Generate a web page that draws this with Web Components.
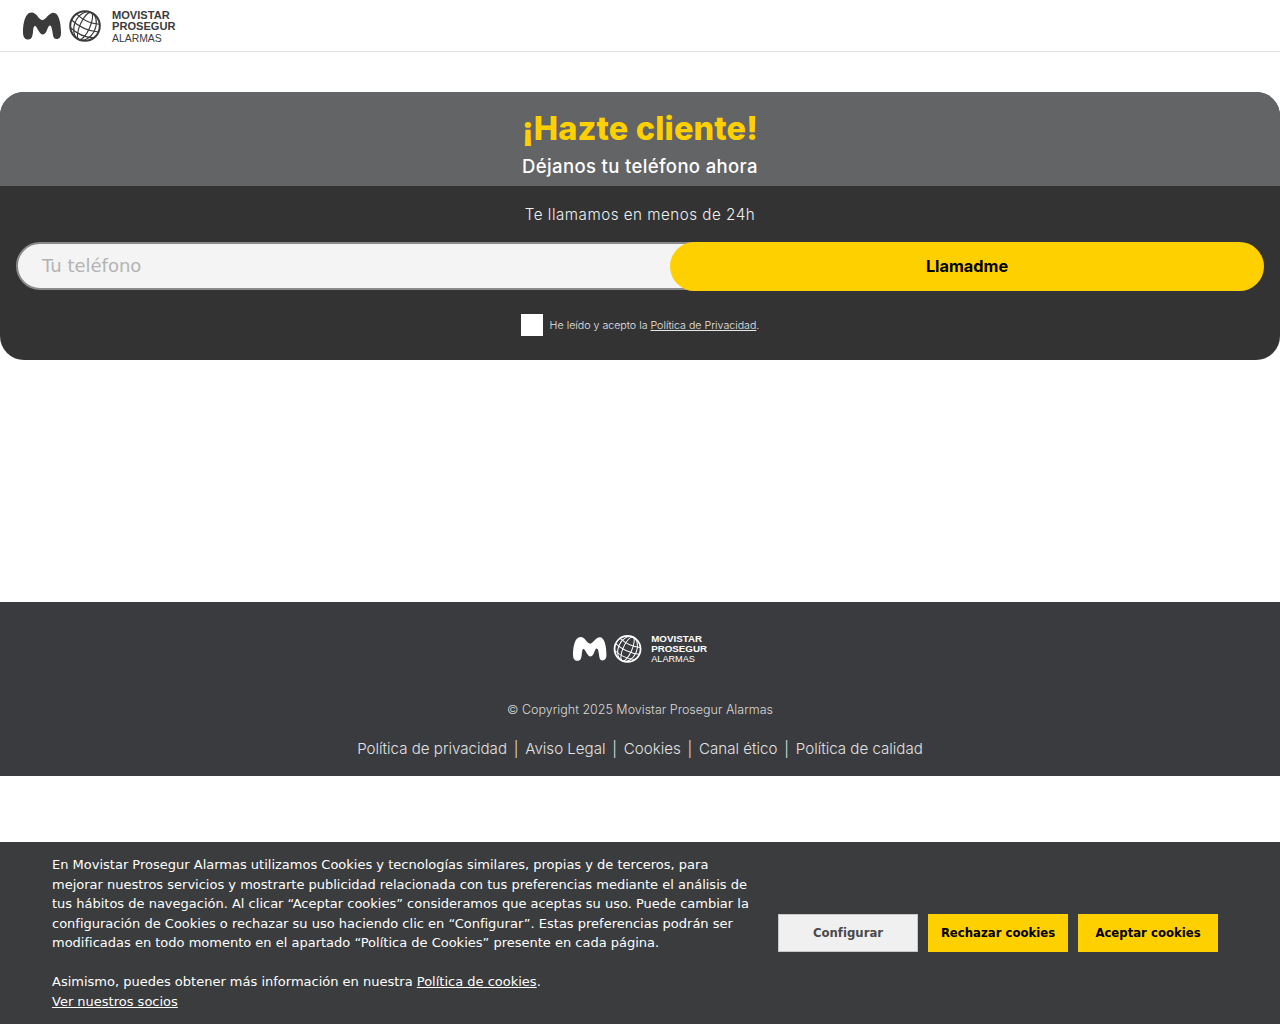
<!DOCTYPE html>
<html lang="es"><head><meta charset="utf-8"><title>Movistar Prosegur Alarmas</title>
<style>
html,body{margin:0;padding:0;background:#fff}
body{height:1024px;overflow:hidden;font-family:"Inter","Noto Sans",sans-serif}
</style></head><body>
<mp-header></mp-header>
<mp-lead-form></mp-lead-form>
<mp-footer></mp-footer>
<mp-cookies></mp-cookies>
<script>
const logoSvg=(c,w,h)=>`<svg width="${w}" height="${h}" viewBox="0 0 78 34" fill="none" aria-hidden="true">
<path fill="${c}" d="M0 23.500C0 15 2 3.500 8.500 3.500C14 3.500 15.500 11 19.500 11C23 11 25.500 3.800 30.500 3.800C35.500 3.800 38 13 38 24C38 28.500 36 30 33.500 30C30.500 30 30 27 29.500 23C29 20 28.500 16.500 26.800 16.500C24.500 16.500 24 25.500 20 25.500C16 25.500 14 17 12 17C10.500 17 10.300 20 10 23C9.500 27 9 30.500 5 30.500C2 30.500 0 28 0 23.500Z"/>
<circle cx="62" cy="17" r="14.800" stroke="${c}" stroke-width="2"/>
<g transform="rotate(24 62 17)" stroke="${c}" stroke-width="1.150" fill="none">
<ellipse cx="62" cy="17" rx="5" ry="14.800"/><ellipse cx="62" cy="17" rx="10.500" ry="14.800"/>
<path d="M49.500 9.500Q62 14 74.500 9.500M47.200 17Q62 22 76.800 17M49.500 24.500Q62 29 74.500 24.500"/></g></svg>`;
class MpLogo extends HTMLElement{connectedCallback(){
const c=this.getAttribute('color')||'#3b3b3b';
const k=parseFloat(this.getAttribute('scale')||'1');
const pad=this.getAttribute('pad')||'2.5';
this.attachShadow({mode:'open'}).innerHTML=`<style>
:host{display:inline-flex;align-items:center;gap:${11*k}px;color:${c};text-align:left}
.t{font:700 ${11.1*k}px/${11.5*k}px "Liberation Sans",Arial,sans-serif;padding-top:${pad}px}
.t span{display:block}.t .l{font-weight:400;font-size:${10.4*k}px}
svg{display:block}
</style>${logoSvg(c,78*k,34*k)}<div class="t"><span>MOVISTAR</span><span>PROSEGUR</span><span class="l">ALARMAS</span></div>`;
}}
customElements.define('mp-logo',MpLogo);
class MpHeader extends HTMLElement{constructor(){super();this.attachShadow({mode:'open'}).innerHTML=`<style>
:host{display:flex;align-items:center;box-sizing:border-box;height:52px;padding:0 0 0 23px;border-bottom:1px solid #e3e3e3;background:#fff}
</style><mp-logo pad="3"></mp-logo>`}}
customElements.define('mp-header',MpHeader);
class MpLeadForm extends HTMLElement{constructor(){super();this.attachShadow({mode:'open'}).innerHTML=`<style>
:host{display:block;margin-top:40px;border-radius:24px;overflow:hidden;background:#333;text-align:center}
.top{height:94px;box-sizing:border-box;background:#636466;padding-top:17px}
h1{margin:0;font:800 32.500px/40px "Inter",sans-serif;color:#ffd000;letter-spacing:.15px}
h2{margin:0;padding-top:5px;font:500 18.500px/24px "Inter",sans-serif;color:#fff;letter-spacing:.36px}
.body{height:174px;box-sizing:border-box;padding-top:19px}
.sub{font:300 15.200px/20px "Inter",sans-serif;color:#f0f0f0;height:37px;letter-spacing:.5px}
.row{display:flex;margin:0 16px;height:49px}
.inp{flex:1 1 auto;box-sizing:border-box;height:48px;background:#f4f4f4;border:2px solid #8a8a8a;border-radius:24px 0 0 24px;margin-right:-30px;padding-left:24px;text-align:left;font:400 18px/44px "DejaVu Sans",sans-serif;color:#b3b3b3}
.btn{position:relative;flex:0 0 594px;height:49px;border-radius:25px;background:#ffd000;color:#000;font:700 16.300px/49px "Inter",sans-serif}
.ok{display:flex;justify-content:center;align-items:flex-start;gap:7px;margin-top:23px;font:300 10.650px/22px "Inter",sans-serif;color:#e6e6e6}
.cb{width:22px;height:22px;background:#fff;flex:none}
.ok span+span{padding-top:1px}
a{color:inherit;text-decoration:underline}
</style>
<div class="top"><h1>¡Hazte cliente!</h1><h2>Déjanos tu teléfono ahora</h2></div>
<div class="body"><div class="sub">Te llamamos en menos de 24h</div>
<div class="row"><div class="inp">Tu teléfono</div><div class="btn">Llamadme</div></div>
<div class="ok"><span class="cb"></span><span>He leído y acepto la <a>Política de Privacidad</a>.</span></div></div>`}}
customElements.define('mp-lead-form',MpLeadForm);
class MpFooter extends HTMLElement{constructor(){super();this.attachShadow({mode:'open'}).innerHTML=`<style>
:host{display:block;box-sizing:border-box;margin-top:242px;height:174px;background:#3a3b3e;text-align:center;padding-top:32px;color:#e2e2e2}
.logo{height:30px;display:flex;justify-content:center}
.c{margin-top:36px;font:300 12.500px/20px "Inter",sans-serif;color:#d9d9d9}
.links{margin-top:18px;display:flex;justify-content:center;gap:6.800px;font:300 15.100px/22px "Inter",sans-serif}
</style><div class="logo"><mp-logo color="#ffffff" scale="0.88" pad="0.5"></mp-logo></div>
<div class="c">© Copyright 2025 Movistar Prosegur Alarmas</div>
<div class="links"><span>Política de privacidad</span><span>|</span><span>Aviso Legal</span><span>|</span><span>Cookies</span><span>|</span><span>Canal ético</span><span>|</span><span>Política de calidad</span></div>`}}
customElements.define('mp-footer',MpFooter);
class MpCookies extends HTMLElement{constructor(){super();this.attachShadow({mode:'open'}).innerHTML=`<style>
:host{position:fixed;left:0;right:0;bottom:0;height:182px;box-sizing:border-box;background:#3a3c3e;color:#fff;display:flex;align-items:center;padding:0 62px 0 52px;font:400 13px/19.500px "DejaVu Sans",sans-serif}
.txt{width:702px;flex:none;margin-right:24px}
p{margin:0}
p+p{margin-top:19.500px}
a{color:inherit;text-decoration:underline}
.btns{display:flex;gap:10px;flex:none}
.b{box-sizing:border-box;width:140px;height:38px;padding-top:1px;display:flex;align-items:center;justify-content:center;font:700 11.700px/1 "DejaVu Sans",sans-serif;background:#ffd000;color:#000}
.b.alt{background:#f0f0f0;color:#4a4a4c;border:1px solid #c8c8c8}
</style><div class="txt"><p>En Movistar Prosegur Alarmas utilizamos Cookies y tecnologías similares, propias y de terceros, para mejorar nuestros servicios y mostrarte publicidad relacionada con tus preferencias mediante el análisis de tus hábitos de navegación. Al clicar “Aceptar cookies” consideramos que aceptas su uso. Puede cambiar la configuración de Cookies o rechazar su uso haciendo clic en “Configurar”. Estas preferencias podrán ser modificadas en todo momento en el apartado “Política de Cookies” presente en cada página.</p>
<p>Asimismo, puedes obtener más información en nuestra <a>Política de cookies</a>.<br><a>Ver nuestros socios</a></p></div>
<div class="btns"><div class="b alt">Configurar</div><div class="b">Rechazar cookies</div><div class="b">Aceptar cookies</div></div>`}}
customElements.define('mp-cookies',MpCookies);
</script></body></html>
